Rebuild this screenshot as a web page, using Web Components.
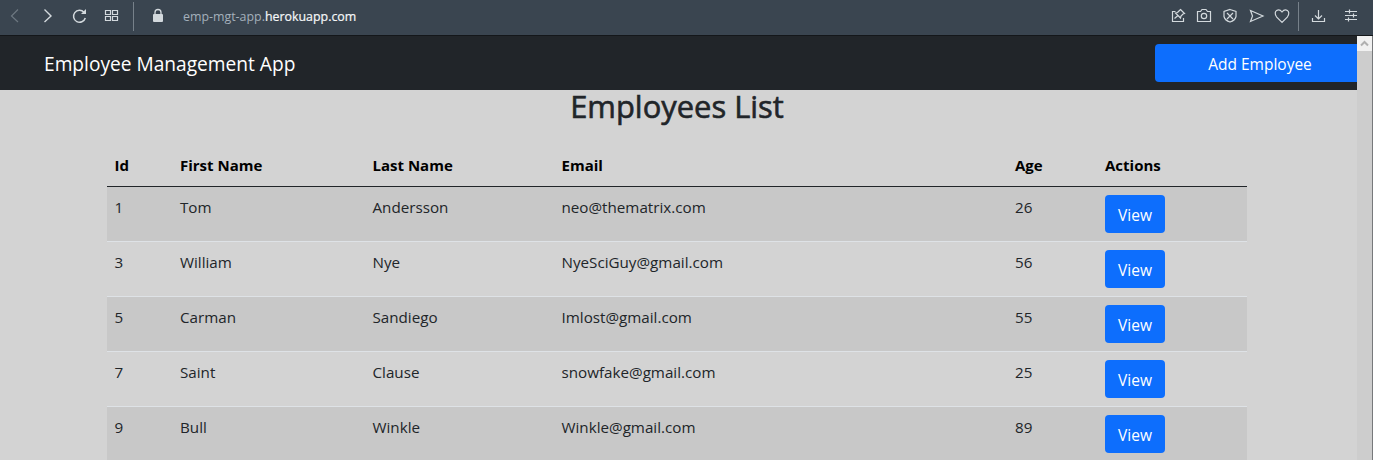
<!DOCTYPE html>
<html lang="en">
<head>
<meta charset="utf-8">
<title>Employee Management App</title>
<style>
html,body{margin:0;height:100%;overflow:hidden}
body{font:15.2px/24px "Open Sans","Noto Sans",sans-serif;background:#d3d3d3}
</style>
</head>
<body>
<app-window></app-window>
<script>
const define=(name,html,init)=>customElements.define(name,class extends HTMLElement{
  constructor(){super();this.attachShadow({mode:'open'}).innerHTML=html;}
  connectedCallback(){if(init)init.call(this,this.shadowRoot);}
});

define('browser-bar',`<style>
:host{display:flex;box-sizing:border-box;height:36px;background:#3a4550;border-bottom:1px solid #14171a;color:#d3d9dd}
svg{display:block;flex:none;fill:none;stroke:currentColor;stroke-width:1.2}
.url{flex:1;padding-top:5px;margin-left:6px;font-size:12.4px;color:#a4b0bb;white-space:nowrap}
b{font-weight:400;color:#f5f7f8;-webkit-text-stroke:.2px #f5f7f8}
</style>
<svg width="177" height="35" viewBox="0 0 177 35">
<path d="M18 9.500L11.500 16l6.500 6" stroke="#6c7780"/>
<path d="M44.500 9.500L51 16l-6.500 6" stroke-width="1.400"/>
<path d="M84 12.200A6 6 0 1 0 85.300 18" stroke-width="1.500"/><path d="M86 9v5h-5z" fill="currentColor" stroke="none"/>
<path d="M105.500 10.500h5v4h-5zM112.500 10.500h5v4h-5zM105.500 16.500h5v4h-5zM112.500 16.500h5v4h-5z"/>
<path d="M133.500 2v29" stroke="#77818a" stroke-width="1"/>
<rect x="153" y="14" width="10" height="8" rx="1" fill="currentColor" stroke="none"/><path d="M155 14.500v-2a3 3 0 0 1 6 0v2" stroke-width="1.300"/>
</svg>
<div class="url">emp-mgt-app.<b>herokuapp.com</b></div>
<svg width="208" height="35" viewBox="1165 0 208 35">
<path d="M1175.500 11.500h-3v10h11V18M1174.500 18.500l3.500-3M1180.500 9.500l4 4-1.500.5-2 2-.5 2-5-5 2-.5 2-2z"/>
<path d="M1197.500 11.500h3l1.500-2h4l1.500 2h3v10h-13z"/><circle cx="1204" cy="16" r="2.700"/>
<path d="M1230 9.500l6 2v5q-1 4-6 5.500q-5-1.500-6-5.500v-5zM1227 13l6 6m0-6l-6 6"/>
<path d="M1250.500 10.500l12.500 5.500-12.500 5.500 2-5.500z"/>
<path d="M1282 22.300l-5.500-5.500C1272.500 10.500 1279 8 1282 12c3-4 9.500-1.500 5.500 4.800z"/>
<path d="M1298.500 2v29" stroke="#77818a" stroke-width="1"/>
<path d="M1318.500 10v9M1315 15.500l3.500 3.500 3.500-3.500M1312.500 18v3.500h12V18"/>
<path d="M1345 11.500h12M1345 15.500h12M1345 19.500h12M1349.500 9.500v4M1353.500 13.500v4M1348.500 17.500v4"/>
</svg>`);

define('app-button',`<style>
:host{display:inline-flex;box-sizing:border-box;height:38px;padding-top:1px;align-items:center;justify-content:center;border-radius:4px;background:#0d6efd;color:#fff;font-size:15.500px;white-space:nowrap}
</style><slot></slot>`);

define('nav-bar',`<style>
:host{display:flex;height:54px;box-sizing:border-box;padding-left:44px;align-items:center;background:#212529;color:#fff;overflow:hidden}
.brand{flex:1;font-size:19.150px;line-height:30px;padding-top:1px;white-space:nowrap}
app-button{width:210px;margin-right:-8px;flex:none}
</style><span class="brand">Employee Management App</span><app-button>Add Employee</app-button>`);

define('employee-table',`<style>
:host{display:block;width:1140px;color:#212529}
.row{display:grid;grid-template-columns:65.500px 192.500px 189px 453.500px 90px 149.500px;height:55px;box-sizing:border-box;border-bottom:1px solid #dee2e6}
.row:nth-of-type(even){background:#c8c8c8}
.row>div{padding:8px 7.500px}
.head{height:41px;font-size:15px;font-weight:700;color:#000;border-bottom-color:#212529}
.head>div{padding-top:7px}
app-button{width:60px}
</style>`,function(root){
  const rows=[['Id','First Name','Last Name','Email','Age','Actions'],
    [1,'Tom','Andersson','neo@thematrix.com',26],
    [3,'William','Nye','NyeSciGuy@gmail.com',56],
    [5,'Carman','Sandiego','Imlost@gmail.com',55],
    [7,'Saint','Clause','snowfake@gmail.com',25],
    [9,'Bull','Winkle','Winkle@gmail.com',89]];
  rows.forEach((cells,i)=>{
    const row=document.createElement('div');
    row.className=i?'row':'row head';
    for(const text of cells){
      const cell=document.createElement('div');
      cell.textContent=text;
      row.append(cell);
    }
    if(i){
      const cell=document.createElement('div'),button=document.createElement('app-button');
      button.textContent='View';
      cell.append(button);
      row.append(cell);
    }
    root.append(row);
  });
});

define('scroll-bar',`<style>
:host{display:block;width:15px;background:#cdcdcd}
svg{display:block;background:#f1f1f1}
</style><svg width="15" height="15"><path d="M4 9.500l3.500-3.500 3.500 3.500" fill="none" stroke="#b0b0b0" stroke-width="2"/></svg>`);

define('app-window',`<style>
:host{display:flex;flex-direction:column;height:100vh;overflow:hidden}
.view{flex:1;min-height:0;display:flex;border-right:1px solid #77797b}
main{flex:1;min-width:0;overflow:hidden;background:#d3d3d3}
section{width:1140px;margin-left:107px}
h2{margin:0 0 8px;height:48px;font-size:30.900px;line-height:33px;font-weight:400;-webkit-text-stroke:.6px #212529;text-align:center;color:#212529}
</style>
<browser-bar></browser-bar>
<div class="view"><main><nav-bar></nav-bar><section><h2>Employees List</h2><employee-table></employee-table></section></main><scroll-bar></scroll-bar></div>`);
</script>
</body>
</html>
